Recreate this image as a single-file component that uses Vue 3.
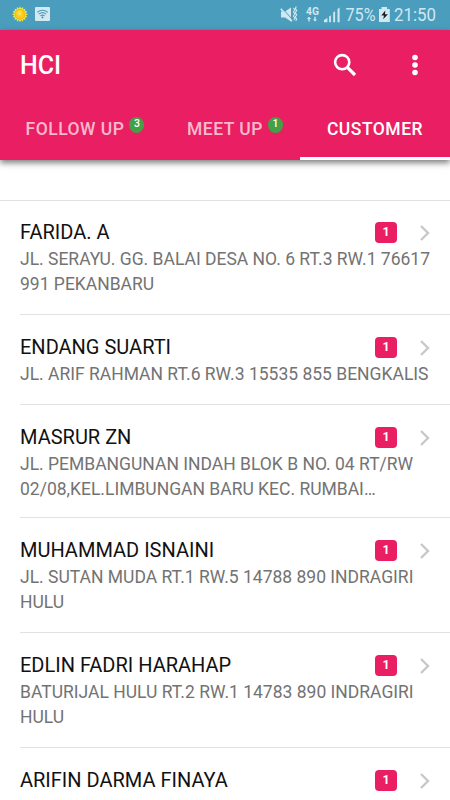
<template>
  <div class="screen">
    <div class="status-bar">
      <svg width="450" height="30" viewBox="0 0 450 30">
        <polygon :points="sunRays" fill="#e9ee45" />
        <circle cx="20" cy="14.3" r="5" fill="#ffc91d" stroke="#e9a51c" stroke-width="0.7" />
        <circle cx="19.5" cy="13" r="2.5" fill="#ffe04e" />
        <rect x="35" y="7" width="15" height="14" rx="1" fill="#d3e9f1" />
        <g fill="none" stroke="#4a9dbd" stroke-width="1.1">
          <path d="M37.3 12.2Q42.5 8.3 47.7 12.2M38.8 14.1Q42.5 11.2 46.2 14.1M40.4 15.9Q42.5 14.3 44.6 15.9" />
        </g>
        <circle cx="42.5" cy="17.4" r="0.9" fill="#2f86a9" />

        <g fill="#d0e8f0">
          <path d="M281 11.5h4l6-4v14l-6-4h-4z" />
          <path d="M324 22.2v-2.2l3.4-2v4.2zM329.1 16.5l1.8-1.2v6.9h-1.8zM333.2 12.5l1.9-1.3v11h-1.9zM337.5 9l2.1-1.6v14.8h-2.1z" />
          <path d="M309 16.8l2.3 2.1h-1.6v2.6h-1.4v-2.6h-1.5zM315 21.5l-2.2-2.1h1.5v-2.6h1.4v2.6h1.5z" />
          <path d="M381.5 7h5.5v2h2.8v13h-10.8v-13h2.5z" />
        </g>
        <path d="M282.3 8.3l10.7 11.9" stroke="#4a9dbd" stroke-width="1" />
        <path d="M280.8 8.8l11.2 12.4" stroke="#d0e8f0" stroke-width="1.6" />
        <path d="M293.4 8l1.5 2-1.5 2 1.5 2-1.5 2 1.5 2-1 2M296.3 6.5l-1 1.9 1.4 2.1-1.4 2.2 1.4 2.1-1.4 2.2 1.4 2.1-1 2" fill="none" stroke="#d0e8f0" stroke-width="1.1" />
        <path d="M385.3 10.5l-4 5h2.7l-.8 3.8 4.7-5.1h-2.9z" fill="#14232b" />
        <text x="306" y="15" font-size="10" font-weight="700" textLength="13" lengthAdjust="spacingAndGlyphs">4G</text>
        <text x="345.5" y="21.3" font-size="18.5" textLength="30" lengthAdjust="spacingAndGlyphs">75%</text>
        <text x="394" y="21.3" font-size="18.5" textLength="42" lengthAdjust="spacingAndGlyphs">21:50</text>
      </svg>
    </div>

    <header class="header">
      <div class="toolbar">
        <h1>HCI</h1>
        <svg class="search" width="24" height="24" viewBox="0 0 24 24">
          <circle cx="9.2" cy="9.2" r="7.1" fill="none" stroke="#fff" stroke-width="2.6" />
          <path d="M14.4 14.4l7.6 7.6" stroke="#fff" stroke-width="3.2" />
        </svg>
        <svg class="more" width="8" height="24" viewBox="0 0 8 24" fill="#fff">
          <circle cx="4" cy="4.5" r="2.8" />
          <circle cx="4" cy="12" r="2.8" />
          <circle cx="4" cy="19.5" r="2.8" />
        </svg>
      </div>
      <nav class="tabs">
        <button
          v-for="tab in tabs"
          :key="tab.label"
          :class="['tab', { active: tab.label === activeTab }]"
          @click="activeTab = tab.label"
        >
          <span class="tab-label">
            {{ tab.label }}
            <span v-if="tab.count" class="tab-badge">{{ tab.count }}</span>
          </span>
        </button>
      </nav>
    </header>

    <ul class="list">
      <li v-for="customer in customers" :key="customer.name" class="item">
        <div class="row">
          <h2>{{ customer.name }}</h2>
          <span class="badge">{{ customer.count }}</span>
          <svg class="chevron" width="12" height="20" viewBox="0 0 12 20">
            <path d="M2 4l7 7-7 7" fill="none" stroke="#c7c7cc" stroke-width="2.4" />
          </svg>
        </div>
        <p :class="{ clamped: customer.clamped }">
          <span v-for="line in customer.address" :key="line">{{ line }}</span>
        </p>
      </li>
    </ul>
  </div>
</template>

<script setup>
import { ref } from 'vue'

const activeTab = ref('CUSTOMER')

const tabs = [
  { label: 'FOLLOW UP', count: 3 },
  { label: 'MEET UP', count: 1 },
  { label: 'CUSTOMER' },
]

const customers = [
  { name: 'FARIDA. A', count: 1, address: ['JL. SERAYU. GG. BALAI DESA NO. 6 RT.3 RW.1 76617', '991 PEKANBARU'] },
  { name: 'ENDANG SUARTI', count: 1, address: ['JL. ARIF RAHMAN RT.6 RW.3 15535 855 BENGKALIS'] },
  { name: 'MASRUR ZN', count: 1, clamped: true, address: ['JL. PEMBANGUNAN INDAH BLOK B NO. 04 RT/RW', '02/08,KEL.LIMBUNGAN BARU KEC. RUMBAI…'] },
  { name: 'MUHAMMAD ISNAINI', count: 1, address: ['JL. SUTAN MUDA RT.1 RW.5 14788 890 INDRAGIRI', 'HULU'] },
  { name: 'EDLIN FADRI HARAHAP', count: 1, address: ['BATURIJAL HULU RT.2 RW.1 14783 890 INDRAGIRI', 'HULU'] },
  { name: 'ARIFIN DARMA FINAYA', count: 1, address: [] },
]

// 16 rays around the sun
const sunRays = Array.from({ length: 32 }, (_, i) => {
  const r = i % 2 ? 5.8 : 8
  const a = (i * Math.PI) / 16
  return `${(20 + r * Math.cos(a)).toFixed(2)},${(14.3 + r * Math.sin(a)).toFixed(2)}`
}).join(' ')
</script>

<style>
body {
  margin: 0;
  background: #fff;
}
</style>

<style scoped>
.screen {
  width: 450px;
  height: 800px;
  overflow: hidden;
  background: #fff;
  font-family: Roboto, sans-serif;
}

.status-bar {
  height: 30px;
  background: #4a9dbd;
}

.status-bar svg {
  display: block;
}

.status-bar text {
  fill: #d0e8f0;
}

.header {
  height: 130px;
  background: #e91e63;
  box-shadow: 0 3px 6px rgba(0, 0, 0, 0.5);
}

.toolbar {
  display: flex;
  align-items: center;
  height: 70px;
  padding: 0 31px 0 20px;
}

h1 {
  flex: 1;
  margin: 0;
  color: #fff;
  font-size: 25px;
  font-weight: 500;
}

.search {
  margin-right: 54px;
}

.tabs {
  display: grid;
  grid-template-columns: repeat(3, 150px);
  height: 60px;
}

.tab {
  display: flex;
  justify-content: center;
  align-items: flex-start;
  padding: 18px 0 0;
  border: 0;
  border-bottom: 3px solid transparent;
  background: none;
  color: rgba(255, 255, 255, 0.7);
  font-family: inherit;
  font-size: 17.5px;
  font-weight: 500;
  line-height: 22px;
  letter-spacing: 0.5px;
  white-space: nowrap;
}

.tab.active {
  color: #fff;
  border-bottom-color: #fff;
}

.tab-label {
  position: relative;
}

.tab-badge {
  position: absolute;
  left: calc(100% + 5px);
  top: -1px;
  width: 15px;
  height: 16px;
  border-radius: 8px;
  background: #43a047;
  color: #fff;
  font-size: 10.5px;
  line-height: 14px;
  letter-spacing: 0;
  text-align: center;
}

.list {
  margin: 40px 0 0;
  padding: 0;
  border-top: 1px solid #e2e2e4;
  list-style: none;
}

.item {
  margin-left: 20px;
  padding: 19px 0 17px;
  border-bottom: 1px solid #e2e2e4;
}

.item:first-child {
  padding-top: 18px;
}

.row {
  display: flex;
  align-items: center;
  height: 26px;
  padding-right: 19px;
}

h2 {
  flex: 1;
  margin: 0;
  color: #111;
  font-size: 20px;
  font-weight: 400;
  line-height: 26px;
}

.badge {
  width: 22px;
  height: 21px;
  margin-right: 22px;
  border-radius: 4px;
  background: #e91e63;
  color: #fff;
  font-size: 12.5px;
  font-weight: 700;
  line-height: 19px;
  text-align: center;
}

p {
  margin: 2px 0 0;
  color: #737373;
  font-size: 17.5px;
  line-height: 25px;
}

p.clamped {
  margin-bottom: -2px;
}

p span {
  display: block;
  white-space: nowrap;
}
</style>
